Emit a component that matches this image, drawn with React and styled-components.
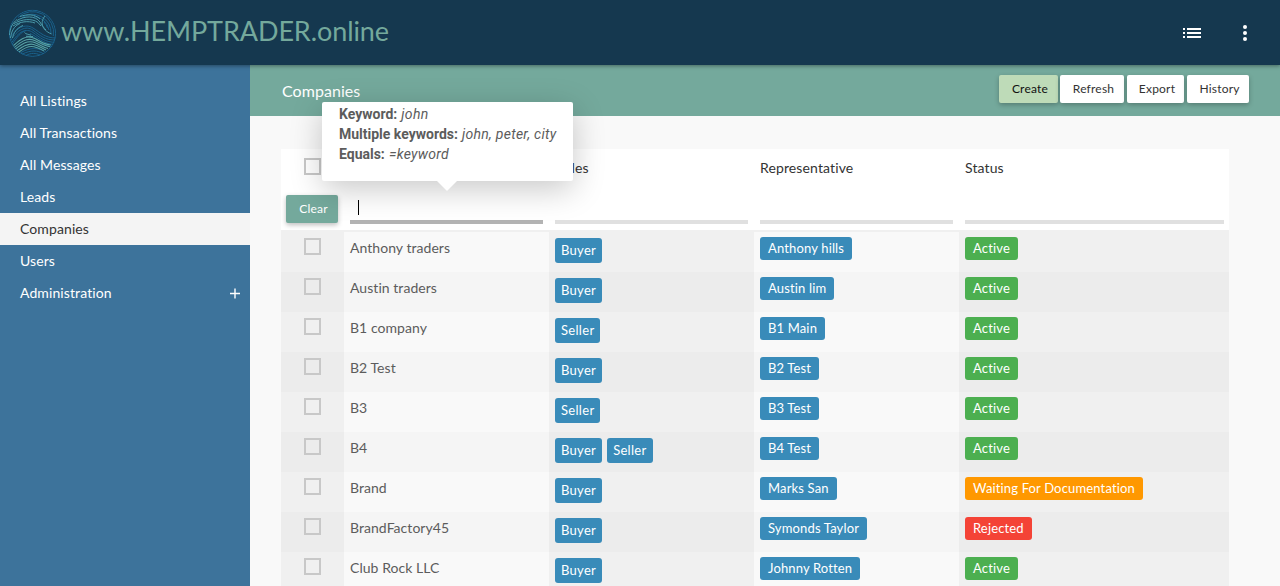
import React from "react";
import styled, { createGlobalStyle } from "styled-components";

const GlobalStyle = createGlobalStyle`
  * { box-sizing: border-box; }
  body {
    margin: 0;
    height: 586px;
    overflow: hidden;
    background: #f9f9f9;
    font-family: Lato, "Liberation Sans", sans-serif;
    font-size: 14px;
    font-variant-ligatures: none;
    color: #5c5c5c;
  }
`;

const Page = styled.div`
  height: 586px;
  display: flex;
  flex-direction: column;
  overflow: hidden;
`;

const Header = styled.header`
  flex: 0 0 65px;
  display: flex;
  align-items: center;
  padding: 0 27px 0 8px;
  background: #15384f;
  box-shadow: 0 1px 4px rgba(0, 0, 0, 0.4);
  z-index: 2;
`;

const Brand = styled.div`
  flex: 1;
  margin-left: 4px;
  padding-bottom: 3px;
  font-size: 27px;
  letter-spacing: -0.1px;
  line-height: 34px;
  color: #74a99c;
`;

const HeaderIcons = styled.div`
  display: flex;
  align-items: center;
  gap: 39px;
  svg { display: block; }
`;

const Body = styled.div`
  flex: 1;
  display: flex;
  min-height: 0;
`;

const Sidebar = styled.nav`
  flex: 0 0 250px;
  padding-top: 20px;
  background: #3d739b;
`;

const NavItem = styled.div`
  height: 32px;
  padding: 0 9px 0 20px;
  display: flex;
  align-items: center;
  justify-content: space-between;
  line-height: 20px;
  letter-spacing: 0.1px;
  color: ${(p) => (p.$active ? "#333" : "#fff")};
  background: ${(p) => (p.$active ? "#f4f4f4" : "transparent")};
`;

const Main = styled.main`
  flex: 1;
  min-width: 0;
`;

const Toolbar = styled.div`
  height: 51px;
  display: flex;
  justify-content: space-between;
  padding: 10px 31px 0 32px;
  background: #74a99c;
`;

const Title = styled.h1`
  margin: 5px 0 0;
  font-size: 16px;
  font-weight: 400;
  line-height: 22px;
  letter-spacing: 0.05px;
  color: #fff;
`;

const Actions = styled.div`
  display: flex;
  gap: 3px;
`;

const Button = styled.button`
  width: ${(p) => p.$width}px;
  height: 28px;
  margin-right: ${(p) => (p.$tight ? -1 : 0)}px;
  padding: 0 0 2px 3px;
  border: 0;
  border-radius: 2px;
  font-family: inherit;
  font-size: 12px;
  font-variant-ligatures: none;
  letter-spacing: 0.2px;
  color: ${(p) => p.$color || "#333"};
  background: ${(p) => p.$bg || "#fff"};
  box-shadow: 0 2px 5px rgba(0, 0, 0, 0.26);
`;

const Table = styled.div`
  width: 948px;
  margin: 33px 0 0 31px;
`;

const Grid = styled.div`
  display: grid;
  grid-template-columns: 63px 205px 205px 205px 270px;
`;

const HeadRow = styled(Grid)`
  height: 39px;
  background: #fff;
`;

const HeadCell = styled.div`
  padding: 9px 6px 0;
  line-height: 20px;
  letter-spacing: 0.12px;
  color: #333;
`;

const FilterRow = styled(Grid)`
  height: 44px;
  background: #fff;
  border-bottom: 2px solid #f0f0f0;
`;

const FilterCell = styled.div`
  padding: 7px 5px 0;
`;

const FilterInput = styled.div`
  height: 29px;
  margin: 0 1px;
  margin-right: ${(p) => (p.$last ? 0 : 1)}px;
  padding: 5px 8px 0;
  border-bottom: 4px solid ${(p) => (p.$focused ? "#b3b3b3" : "#e0e0e0")};
`;

const Caret = styled.div`
  width: 1px;
  height: 15px;
  background: #000;
`;

const Row = styled(Grid)`
  height: 40px;
  background: ${(p) => (p.$odd ? "#f5f5f5" : "#f9f9f9")};
`;

const Cell = styled.div`
  padding: ${(p) => p.$top || 5}px 6px 0;
  line-height: 22px;
  letter-spacing: 0.05px;
  background: ${(p) => (p.$shade ? (p.$odd ? "#ececec" : "#f0f0f0") : "transparent")};
`;

const Check = styled.div`
  width: 17px;
  height: 17px;
  margin-left: 17px;
  border: 2px solid #c8c8c8;
`;

const Roles = styled.div`
  display: flex;
  gap: 5px;
`;

const Tag = styled.span`
  display: block;
  width: fit-content;
  padding: 0 ${(p) => (p.$role ? 6 : 8)}px;
  height: ${(p) => (p.$role ? 25 : 23)}px;
  line-height: ${(p) => (p.$role ? 25 : 23)}px;
  border-radius: 3px;
  font-size: 13px;
  letter-spacing: ${(p) => (p.$role ? 0.3 : 0.15)}px;
  white-space: nowrap;
  color: #fff;
  background: ${(p) => p.$bg || "#398bb9"};
`;

const Tooltip = styled.div`
  position: absolute;
  left: 322px;
  top: 102px;
  width: 251px;
  height: 79px;
  padding: 2px 17px;
  border-radius: 2px;
  background: #fff;
  box-shadow: 0 8px 32px rgba(0, 0, 0, 0.22);
  font-family: Roboto, "Liberation Sans", sans-serif;
  font-size: 14px;
  line-height: 20px;
  white-space: nowrap;
  color: #5c5c5c;
  z-index: 3;
  b { font-weight: 700; }
  i { margin-left: 0.6px; letter-spacing: 0.28px; }
  &::after {
    content: "";
    position: absolute;
    left: 115px;
    top: 79px;
    border: 10px solid transparent;
    border-top-color: #fff;
    border-bottom: 0;
  }
`;

const nav = ["All Listings", "All Transactions", "All Messages", "Leads", "Companies", "Users", "Administration"];

const rows = [
  ["Anthony traders", ["Buyer"], "Anthony hills", "Active"],
  ["Austin traders", ["Buyer"], "Austin lim", "Active"],
  ["B1 company", ["Seller"], "B1 Main", "Active"],
  ["B2 Test", ["Buyer"], "B2 Test", "Active"],
  ["B3", ["Seller"], "B3 Test", "Active"],
  ["B4", ["Buyer", "Seller"], "B4 Test", "Active"],
  ["Brand", ["Buyer"], "Marks San", "Waiting For Documentation"],
  ["BrandFactory45", ["Buyer"], "Symonds Taylor", "Rejected"],
  ["Club Rock LLC", ["Buyer"], "Johnny Rotten", "Active"],
];

const statusColors = {
  Active: "#4caf50",
  "Waiting For Documentation": "#ff9800",
  Rejected: "#f44336",
};

const Logo = () => (
  <svg width="49" height="50" viewBox="0 0 49 50" fill="none">
    <defs>
      <clipPath id="disc"><circle cx="24.5" cy="25.3" r="23.7" /></clipPath>
    </defs>
    <g clipPath="url(#disc)">
      <g stroke="#1b628c" strokeWidth="1">
        <circle cx="24.5" cy="25.3" r="23.1" />
        <path d="M10 9.500A21 21 0 0 1 45.300 28" />
        <path d="M14 9.500A18.700 18.700 0 0 1 43 26" />
        <path d="M26 8.300A17 17 0 0 1 41 22" />
        <path d="M36 14A12 12 0 0 1 39.500 20" />
        <path d="M2 30C8 20 17 15 25 20S37 30 48 30" />
        <path d="M3 32C9 22 18 17 25 22.200S37 32.200 48 32" />
        <path d="M4 34.300C10 24 18 19.500 25 24.500S37 34.500 48 34.300" />
        <path d="M4 36.500C9 29 13 24 18 22.500" />
        <path d="M22 25.500C29 28 35 36.500 47 36.500" />
        <path d="M25 29C31 32 36 38.700 46 38.700" />
        <path d="M13 44.500C22 39 31 40 37 43.500" />
        <path d="M14 46.300C23 41.500 30 42.500 35 45.500" />
        <path d="M18 47.500C23 44.500 28 45 32 47" />
      </g>
      <g stroke="#4b9bab" strokeWidth="1">
        <path d="M9 12.500C16 8 27 7 32 14C33.500 17 36 20 38 22" />
        <path d="M6 15.500C14 11 24 10 30 14.500L33 18" />
        <path d="M5 18C12 13.500 20 12.500 27 15" />
        <path d="M12 8.500C19 6 27 6 32 11" />
        <path d="M37 8C32.500 13 32.500 21.500 43.500 26" />
        <path d="M1.500 27C2 20 4.500 15 9 11.500" />
        <path d="M2.500 30C3.500 23 6 18 12 15.500" />
        <path d="M4.500 30C5.500 25 8.500 20 15 17.500" />
        <path d="M16.500 24.500C18 26.500 20 26 23 27.200M18 28.300L25 28.500" />
      </g>
      <g stroke="#58a3a5" strokeWidth="1.05">
        <path d="M5.500 37.500C12 32 17 27.500 24 29.500S35 36.500 43 37" />
        <path d="M6.500 39.300C13 34 18 30 24.500 31.800S35 38 42 38.800" />
        <path d="M7.500 41C14 36 19 32.500 25 34.100S35 39.600 40 40.500" />
        <path d="M9 42.700C15 38 20 35 25.500 36.400S35 41 38 42" />
        <path d="M11 44C16 40 21 37.500 26 38.700S33 41.500 36 43" />
      </g>
    </g>
  </svg>
);

export default function App() {
  return (
    <Page>
      <GlobalStyle />
      <Header>
        <Logo />
        <Brand>www.HEMPTRADER.online</Brand>
        <HeaderIcons>
          <svg width="20" height="12" viewBox="0 0 20 12" fill="#fff" shapeRendering="crispEdges">
            <path d="M1 1h2v2H1zM5 1h14v2H5zM1 5h2v2H1zM5 5h14v2H5zM1 9h2v2H1zM5 9h14v2H5z" />
          </svg>
          <svg width="12" height="16" viewBox="0 0 12 16" fill="#fff">
            <circle cx="4" cy="2" r="2" />
            <circle cx="4" cy="8" r="2" />
            <circle cx="4" cy="14" r="2" />
          </svg>
        </HeaderIcons>
      </Header>
      <Body>
        <Sidebar>
          {nav.map((label) => (
            <NavItem key={label} $active={label === "Companies"}>
              {label}
              {label === "Administration" && (
                <svg width="12" height="12" viewBox="0 0 12 12" stroke="#fff" strokeWidth="1.4">
                  <path d="M1 6.5H11M6 1.5V11.5" />
                </svg>
              )}
            </NavItem>
          ))}
        </Sidebar>
        <Main>
          <Toolbar>
            <Title>Companies</Title>
            <Actions>
              <Button $width={59} $tight $bg="#bedbb8" $color="#111">Create</Button>
              <Button $width={64}>Refresh</Button>
              <Button $width={57}>Export</Button>
              <Button $width={62}>History</Button>
            </Actions>
          </Toolbar>
          <Table>
            <HeadRow>
              <HeadCell><Check /></HeadCell>
              <HeadCell />
              <HeadCell>Roles</HeadCell>
              <HeadCell>Representative</HeadCell>
              <HeadCell>Status</HeadCell>
            </HeadRow>
            <FilterRow>
              <FilterCell><Button $width={52} $bg="#74a99c" $color="#fff">Clear</Button></FilterCell>
              <FilterCell><FilterInput $focused><Caret /></FilterInput></FilterCell>
              <FilterCell><FilterInput /></FilterCell>
              <FilterCell><FilterInput /></FilterCell>
              <FilterCell><FilterInput $last /></FilterCell>
            </FilterRow>
            {rows.map(([name, roles, rep, status], i) => {
              const odd = i % 2 === 1;
              return (
                <Row key={name} $odd={odd}>
                  <Cell $shade $odd={odd} $top={6}><Check /></Cell>
                  <Cell>{name}</Cell>
                  <Cell $shade $odd={odd} $top={6}>
                    <Roles>{roles.map((r) => <Tag key={r} $role>{r}</Tag>)}</Roles>
                  </Cell>
                  <Cell><Tag>{rep}</Tag></Cell>
                  <Cell $shade $odd={odd}><Tag $bg={statusColors[status]}>{status}</Tag></Cell>
                </Row>
              );
            })}
          </Table>
        </Main>
      </Body>
      <Tooltip>
        <div><b>Keyword:</b> <i>john</i></div>
        <div><b>Multiple keywords:</b> <i>john, peter, city</i></div>
        <div><b>Equals:</b> <i>=keyword</i></div>
      </Tooltip>
    </Page>
  );
}
